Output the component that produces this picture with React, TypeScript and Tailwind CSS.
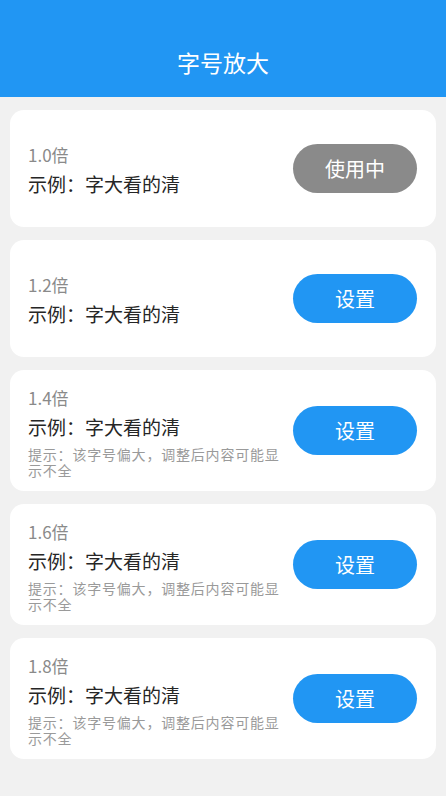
import * as React from "react";

const levels = [
  { label: "1.0倍", active: true, warn: false },
  { label: "1.2倍", active: false, warn: false },
  { label: "1.4倍", active: false, warn: true },
  { label: "1.6倍", active: false, warn: true },
  { label: "1.8倍", active: false, warn: true },
];

function LevelCard({
  label,
  active,
  warn,
}: {
  label: string;
  active: boolean;
  warn: boolean;
}) {
  return (
    <div className="flex items-center gap-2 min-h-[117px] py-[13px] pl-[18px] pr-[19px] bg-white rounded-[14px]">
      <div className="flex-1 min-w-0">
        <p className="text-[17px] leading-[29px] text-[#8a8a8a]">{label}</p>
        <p className="text-[19px] leading-[29px] text-[#262626]">示例：字大看的清</p>
        {warn && (
          <p className="mt-[5px] text-[14px] leading-[16px] tracking-[0.8px] text-[#9a9a9a]">
            提示：该字号偏大，调整后内容可能显示不全
          </p>
        )}
      </div>
      <button
        type="button"
        className={
          active
            ? "shrink-0 w-[124px] h-[49px] rounded-full bg-[#8a8a8a] text-white text-[20px]"
            : "shrink-0 w-[124px] h-[49px] rounded-full bg-[#2196f3] text-white text-[20px]"
        }
      >
        {active ? "使用中" : "设置"}
      </button>
    </div>
  );
}

export default function App() {
  return (
    <div
      className="w-[446px] h-[796px] bg-[#f1f1f1] overflow-hidden"
      style={{ fontFamily: '"Noto Sans CJK SC", "Noto Sans", sans-serif' }}
    >
      <header className="h-[97px] pt-[27px] flex items-center justify-center bg-[#2196f3]">
        <h1 className="text-[23px] text-white">字号放大</h1>
      </header>
      <main className="flex flex-col gap-[13px] pt-[13px] px-[10px]">
        {levels.map((l) => (
          <LevelCard key={l.label} {...l} />
        ))}
      </main>
    </div>
  );
}
